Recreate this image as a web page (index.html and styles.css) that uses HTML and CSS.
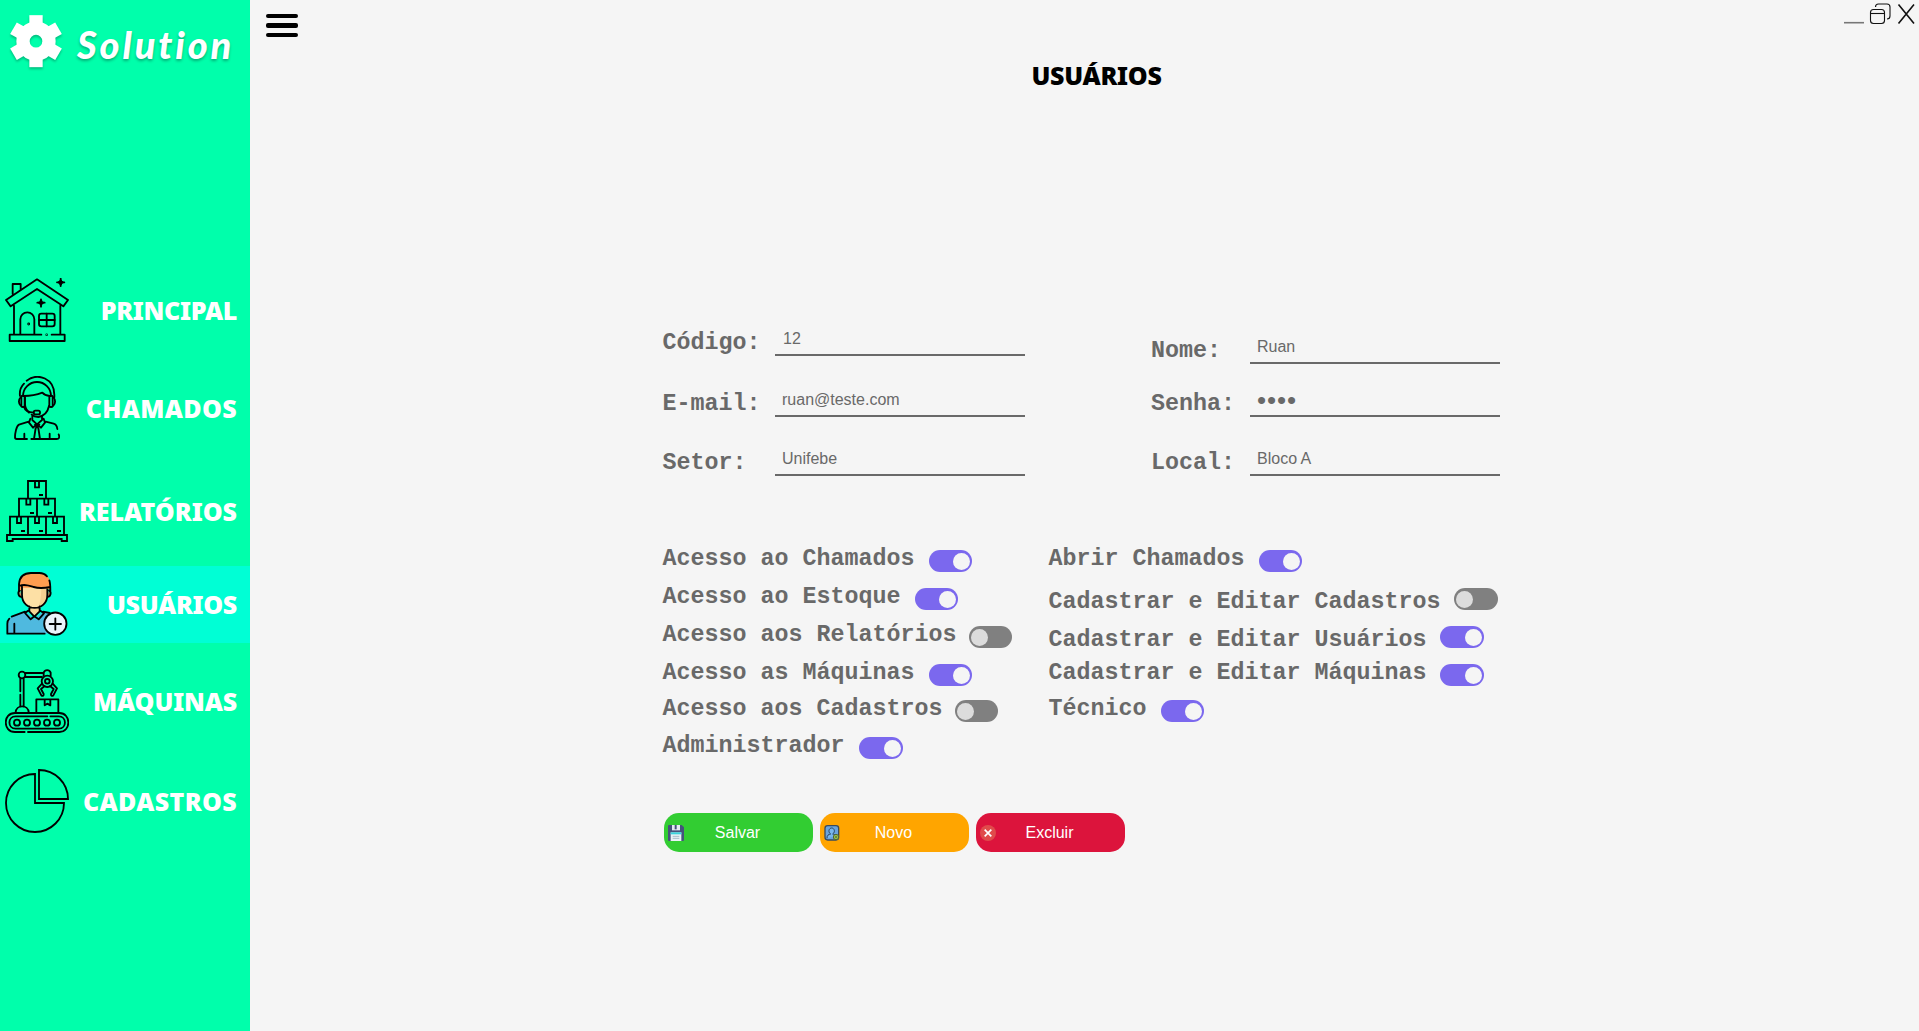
FILE: index.html
```html
<!DOCTYPE html>
<html lang="pt-BR">
<head>
<meta charset="utf-8">
<title>Solution - Usuários</title>
<link rel="stylesheet" href="styles.css">
</head>
<body>
<div class="app">
  <aside class="sidebar">
    <div class="brand">
      <svg class="brand-gear" viewBox="29 43 162 162">
        <g transform="translate(110 124.500)" fill="#fff">
          <circle r="39" fill="none" stroke="#fff" stroke-width="40"/>
          <path d="M-20-50v-28h40v28z"/><path d="M-20-50v-28h40v28z" transform="rotate(60)"/><path d="M-20-50v-28h40v28z" transform="rotate(120)"/><path d="M-20-50v-28h40v28z" transform="rotate(180)"/><path d="M-20-50v-28h40v28z" transform="rotate(240)"/><path d="M-20-50v-28h40v28z" transform="rotate(300)"/>
        </g>
      </svg>
      <span class="brand-name">Solution</span>
    </div>
    <nav class="nav">
      <a class="nav-item tight">
        <svg class="nav-icon line" viewBox="15 54 192 192">
          <path d="M38 102V72h24v17M111 58L18 120l14 19 79-52 79 52 14-19zM42 137v85M181 137v85M124 224H29v19h165v-19h-39M61 222v-44a21 21 0 0 1 42 0v44"/>
          <rect x="117" y="161" width="47" height="38" rx="7"/><path d="M140 161v38M117 180h47M182 56v22M171 67h22M123 118v22M112 128h22" />
          <path d="M178 67h8M182 63v8M119 128h8M123 124v8" stroke-width="9"/>
          <circle cx="86" cy="192" r="1.500"/><circle cx="140" cy="224" r="1"/>
        </svg>
        <span>PRINCIPAL</span>
      </a>
      <a class="nav-item wide">
        <svg class="nav-icon line" viewBox="15 348 192 192">
          <path d="M60 408c-2-15 2-27 12-37M80 362c35-26 83-5 83 42v8M69 408a42 42 0 0 1 84 0M71 408c25 0 38-3 56-10 5 6 10 9 22 10M75 408v24c0 10 5 19 12 26M147 438c-4 19-15 30-32 33-9 0-15-2-20-7"/>
          <rect x="64" y="407" width="10" height="34" rx="4"/><rect x="148" y="407" width="10" height="34" rx="4"/>
          <path d="M62 412c-7 7-7 18 0 25M160 412c7 7 7 18 0 25M72 440c3 12 12 17 29 18"/><rect x="101" y="452" width="19" height="11" rx="5"/>
          <path d="M97 468v12l14 13 15-13v-12M91 476l-4 12 12 15 11-10M131 476l4 12-12 15-12-10M105 494l6 8 7-8M107 504l-5 33h18l-5-33M86 485l-29 9c-8 4-12 26-12 38 0 3 2 5 5 5h31M137 485l24 6c7 2 10 8 11 16M176 523c4 9 1 14-6 14H94M73 521v16M149 521v16"/>
        </svg>
        <span>CHAMADOS</span>
      </a>
      <a class="nav-item">
        <svg class="nav-icon line boxes" viewBox="15 42 192 192">
          <path d="M84 101V48h54v53M105 48v19h12V48M117 90h12M57 155v-54h108v54M111 101v54M79 101v18h12v-18M133 101v18h12v-18M90 144h12M144 144h12M30 209v-54h162v54M84 155v54M138 155v54M51 155v19h12v-19M105 155v19h12v-19M159 155v19h12v-19M63 198h12M117 198h12M171 198h12M21 210h180v18h-16v-6H38v6H21z"/>
        </svg>
        <span>RELATÓRIOS</span>
      </a>
      <a class="nav-item tight active">
        <svg class="nav-icon line" viewBox="15 324 192 192">
          <path d="M60 379c-8 4-6 20 5 20M147 379c8 4 6 20-5 20" fill="#c98d58"/>
          <path d="M88 424v20l15 15 16-15v-20z" fill="#f6d596" stroke="none"/>
          <path d="M22 509v-32c2-13 12-20 26-25l28-9 27 22 26-22 35 10c10 3 15 15 15 27v29z" fill="#4fb9df" stroke="none"/>
          <path d="M65 362v30c0 55 77 55 77 0v-30z" fill="#fde0a5" stroke="none"/>
          <path d="M124 365h18v27c0 24-12 37-29 40 10-18 11-42 11-67z" fill="#f3cf91" stroke="none"/>
          <path d="M57 379v-20c2-20 14-31 34-32h28c22 1 32 17 32 36v13h-8v-5H67v8z" fill="#ff9d50" stroke="none"/>
          <path d="M57 380v-20c2-22 15-33 36-33h25c11 0 18 4 23 10M148 349c3 8 3 20 3 31M57 366c16-6 27-2 44 3 19 6 35 3 50 0M66 367v25c0 53 76 53 76 0v-20M88 427v15l15 16 16-16v-15M84 440l-9 7 17 19 11-9 13 9 16-18-11-8M35 458l40-15M22 509v-30c0-7 3-12 6-15M22 509h112M43 479v29M130 443l19 4"/>
          <circle cx="166" cy="479" r="33.500" fill="#e9f3fb"/><path d="M166 463v34M149 480h34"/>
        </svg>
        <span>USUÁRIOS</span>
      </a>
      <a class="nav-item snug">
        <svg class="nav-icon line" viewBox="15 42 192 192">
          <circle cx="66" cy="60" r="10"/><path d="M76 54h55M76 66h50M61 71v38M71 71v83M61 119v35M131 62V53c4-10 17-10 21 0v9"/>
          <circle cx="142" cy="79" r="17"/><circle cx="142" cy="79" r="7"/>
          <path d="M126 86l-13 14 11 21c4 4 8 0 7-4l-8-15 11-9M158 86l13 14-11 21c-4 4-8 0-7-4l8-15-11-9M47 172c1-24 38-24 39 0M109 173v-40h66v40M134 134v17l8-5 9 5v-17"/>
          <path d="M74 231H45C8 231 8 174 45 174h133c36 0 36 57 0 57H84M142 184H47c-25 0-25 37 0 37h129c25 0 25-37 0-37h-25"/>
          <circle cx="51" cy="203" r="9"/><circle cx="81" cy="203" r="9"/><circle cx="111" cy="203" r="9"/><circle cx="141" cy="203" r="9"/><circle cx="171" cy="203" r="9"/>
        </svg>
        <span>MÁQUINAS</span>
      </a>
      <a class="nav-item wide">
        <svg class="nav-icon line boxes" viewBox="15 342 192 192">
          <path d="M105 357v87h87a87 87 0 1 1-87-87zM117 345a87 87 0 0 1 87 87h-87z"/>
        </svg>
        <span>CADASTROS</span>
      </a>
    </nav>
  </aside>

  <main class="main">
    <header class="topbar">
      <button class="menu" aria-label="Menu"><i></i><i></i><i></i></button>
      <svg class="window-controls" viewBox="0 0 72 22">
        <path d="M1 19.700h20" stroke="#777" stroke-width="1.600"/>
        <rect x="27.500" y="6.500" width="14" height="14" rx="3"/><path d="M27.500 10.500h14"/>
        <path d="M32.500 4c0-2 1-3 3-3H44c2 0 3 1 3 3v9c0 2-1 3-3 3"/>
        <path d="M55.500 1.500l15.500 19M71 1.500l-15.500 19" stroke-width="1.600"/>
      </svg>
    </header>
    <h1 class="title">USUÁRIOS</h1>

    <form class="form">
      <section class="fields">
        <div class="field-col">
          <div class="field first"><label>Código:</label><div class="value code">12</div></div>
          <div class="field"><label>E-mail:</label><div class="value">ruan@teste.com</div></div>
          <div class="field"><label>Setor:</label><div class="value">Unifebe</div></div>
        </div>
        <div class="field-col right">
          <div class="field first"><label>Nome:</label><div class="value">Ruan</div></div>
          <div class="field"><label>Senha:</label><div class="value secret">••••</div></div>
          <div class="field"><label>Local:</label><div class="value">Bloco A</div></div>
        </div>
      </section>

      <section class="permissions">
        <div class="perm"><span>Acesso ao Chamados</span><i class="toggle on"></i></div>
        <div class="perm"><span>Abrir Chamados</span><i class="toggle on"></i></div>
        <div class="perm"><span>Acesso ao Estoque</span><i class="toggle on"></i></div>
        <div class="perm low"><span>Cadastrar e Editar Cadastros</span><i class="toggle"></i></div>
        <div class="perm near"><span>Acesso aos Relatórios</span><i class="toggle"></i></div>
        <div class="perm low"><span>Cadastrar e Editar Usuários</span><i class="toggle on"></i></div>
        <div class="perm"><span>Acesso as Máquinas</span><i class="toggle on"></i></div>
        <div class="perm"><span>Cadastrar e Editar Máquinas</span><i class="toggle on"></i></div>
        <div class="perm near"><span>Acesso aos Cadastros</span><i class="toggle"></i></div>
        <div class="perm"><span>Técnico</span><i class="toggle on"></i></div>
        <div class="perm far"><span>Administrador</span><i class="toggle on"></i></div>
      </section>

      <section class="actions">
        <button type="button" class="btn save">
          <svg viewBox="0 0 48 48"><path d="M3 0h38l7 7v38q0 3-3 3H3q-3 0-3-3V3q0-3 3-3z" fill="#46527c"/><path d="M12 0h24v16H12z" fill="#e4eaf2"/><path d="M20 0h6v13h-6z" fill="#46527c"/><path d="M8 22h32v26H8z" fill="#e9f2f6"/><path d="M8 22h32v6H8z" fill="#3ad3dc"/><path d="M14 34h20M14 40h20" stroke="#a9bcc9" stroke-width="3"/></svg>
          <span>Salvar</span>
        </button>
        <button type="button" class="btn new">
          <svg viewBox="0 0 48 48"><rect x="3" y="2" width="41" height="43" rx="8" fill="#6ba4dc" stroke="#394b5d" stroke-width="4"/><path d="M9 40c0-9 4-12 11-13-9-6-5-18 3-18s12 12 3 18c6 1 9 3 11 6" fill="#78b6ed" stroke="#29445f" stroke-width="3"/><circle cx="36" cy="36" r="8" fill="#a4cf4c" stroke="#526534" stroke-width="3"/><path d="M36 32v8M32 36h8" stroke="#526534" stroke-width="2.500"/></svg>
          <span>Novo</span>
        </button>
        <button type="button" class="btn delete">
          <svg viewBox="0 0 48 48"><circle cx="24" cy="24" r="24" fill="#e04b4b"/><path d="M14 14l20 20M34 14L14 34" stroke="#fff" stroke-width="5"/></svg>
          <span>Excluir</span>
        </button>
      </section>
    </form>
  </main>
</div>
</body>
</html>
```
FILE: styles.css
```css
* { box-sizing: border-box; }

body {
  margin: 0;
  background: #f5f5f5;
  font-family: "Liberation Sans", Arial, sans-serif;
  overflow: hidden;
}

.app { display: flex; height: 100vh; }

/* Sidebar */
.sidebar { flex: none; width: 250px; background: #00ffab; }

.brand {
  display: flex;
  height: 90px;
  padding: 14px 0 0 9px;
  color: #fff;
}
.brand-gear {
  flex: none;
  width: 54px;
  height: 54px;
  filter: drop-shadow(0 2px 1px rgba(0, 0, 0, .25));
}
.brand-name {
  margin: 7px 0 0 14px;
  font: italic 900 38px/46px Lato, sans-serif;
  letter-spacing: 2.900px;
  text-shadow: 0 2px 3px rgba(0, 0, 0, .3);
}

.nav { padding-top: 181.500px; }
.nav-item {
  display: flex;
  align-items: center;
  justify-content: space-between;
  height: 77px;
  margin-bottom: 21px;
  padding: 0 13px 0 5px;
  color: #fff;
  font: 900 25px/36px "Noto Sans", "Open Sans", sans-serif;
}
.nav-item span { margin-top: -1px; }
.nav-item.tight { letter-spacing: -.3px; }
.nav-item.snug { letter-spacing: -.15px; }
.nav-item.wide { letter-spacing: .35px; }
.nav-item:nth-child(2) { margin-bottom: 26px; }
.nav-item:nth-child(3) { margin-bottom: 16px; }
.nav-item:nth-child(4) { margin-bottom: 20px; }
.nav-item:nth-child(5) { margin-bottom: 23px; }
.nav-item.active { background: #00ffd5; }
.nav-icon { flex: none; width: 64px; height: 64px; }
.line {
  fill: none;
  stroke: #000;
  stroke-width: 5.5;
  stroke-linecap: round;
  stroke-linejoin: round;
}
.boxes { stroke-linecap: butt; stroke-linejoin: miter; }

/* Main area */
.main { flex: 1; min-width: 0; }
.topbar {
  display: flex;
  justify-content: space-between;
  align-items: flex-start;
  height: 57px;
  padding-left: 16px;
}
.menu {
  display: flex;
  flex-direction: column;
  gap: 5px;
  width: 32px;
  margin-top: 14px;
  padding: 0;
  border: 0;
  background: none;
}
.menu i { height: 4.400px; border-radius: 2px; background: #000; width: 100%; }
.window-controls {
  width: 72px;
  height: 22px;
  margin: 3px 4px 0 0;
  fill: none;
  stroke: #111;
  stroke-width: 1.1;
}
.title {
  margin: 0;
  padding-left: 24px;
  text-align: center;
  font: 900 25px/36px "Noto Sans", "Open Sans", sans-serif;
  letter-spacing: -.3px;
  color: #000;
}

.form { margin: 233px 0 0 412.500px; color: #696969; }
.fields { display: flex; gap: 126px; }
.field-col { display: flex; flex-direction: column; }
.field { display: flex; height: 30px; margin-bottom: 29px; }
.field.first { margin-bottom: 31px; }
.field:last-child { margin-bottom: 0; }
.right .first { margin: 8px 0 23px; }
.field label {
  width: 112.500px;
  font: bold 23.333px/34px "Liberation Mono", "Courier New", monospace;
}
.right label { width: 99px; }
.value {
  width: 250px;
  height: 30px;
  padding-left: 7px;
  border-bottom: 2px solid #696969;
  font-size: 16px;
  line-height: 25px;
}
.value.code { padding-left: 8px; }
.value.secret { font-size: 26px; letter-spacing: .9px; line-height: 27px; }

.permissions {
  display: grid;
  grid-template-columns: 386px auto;
  grid-template-rows: 38px 38px 38px 36px 37px 22px;
  margin-top: 74px;
  font: bold 23.333px/18px "Liberation Mono", "Courier New", monospace;
  white-space: nowrap;
}
.perm { display: flex; align-items: flex-start; gap: 14px; }
.perm.near { gap: 12.500px; }
.perm.far { gap: 14.800px; }
.perm.low span { padding-top: 5px; }
.toggle {
  display: flex;
  width: 43.500px;
  height: 22px;
  padding: 2.500px 2px;
  border-radius: 11px;
  background: #808080;
}
.toggle::before {
  content: "";
  width: 17px;
  height: 17px;
  border-radius: 50%;
  background: #dcdcdc;
}
.toggle.on { justify-content: flex-end; background: #7b68ee; }
.toggle.on::before { background: #f5f5f5; }

.actions { display: flex; gap: 7px; margin: 54px 0 0 1.500px; }
.btn {
  display: flex;
  align-items: center;
  width: 149px;
  height: 39px;
  padding: 0 22px 0 4px;
  border: 0;
  border-radius: 15px;
  color: #fff;
  font: 16px/20px "Liberation Sans", Arial, sans-serif;
}
.btn svg { flex: none; width: 16px; height: 16px; }
.btn span { flex: 1; text-align: center; }
.save { background: #32cd32; }
.new { background: #ffa500; }
.delete { background: #dc143c; }
```
